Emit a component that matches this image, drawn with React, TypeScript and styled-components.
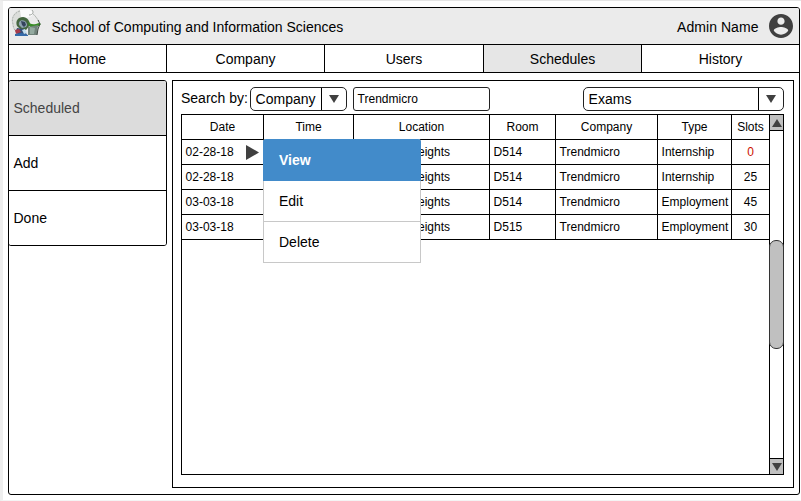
import React from "react";
import styled, { createGlobalStyle } from "styled-components";

const Global = createGlobalStyle`
  *, *::before, *::after { box-sizing: border-box; }
  html, body { margin: 0; background: #fff; overflow: hidden; }
  body { font-family: "Liberation Sans", Arial, sans-serif; font-size: 14px; color: #000; }
`;

const Page = styled.div`
  width: 801px;
  height: 501px;
  padding: 6px 1px 0 5px;
  background: #fff;
  border-top: 1px solid #e5e5e5;
  border-left: 3px solid #eee;
  border-bottom: 1px solid #f4f4f4;
`;

const Frame = styled.div`
  width: 792px;
  height: 488px;
  border: 1px solid #000;
  border-radius: 3px;
  background: #fff;
`;

const Header = styled.header`
  display: flex;
  align-items: center;
  height: 37px;
  padding: 0 6px 0 1px;
  background: #ebebeb;
  border-bottom: 1px solid #000;
  border-radius: 2px 2px 0 0;
`;

const Title = styled.div`
  flex: 1;
  padding: 1px 0 0 9.5px;
`;

const Admin = styled.div`
  padding-top: 1px;
  margin-right: 10.5px;
  letter-spacing: 0.05px;
`;

const Nav = styled.nav`
  display: grid;
  grid-template-columns: 158px 158px 159px 158px 157px;
  height: 28px;
  border-bottom: 1px solid #000;
`;

const Tab = styled.div<{ $active?: boolean }>`
  display: flex;
  align-items: center;
  justify-content: center;
  padding-top: 1px;
  background: ${(p) => (p.$active ? "#e6e6e6" : "#fff")};
  border-right: 1px solid #000;
  &:last-child { border-right: 0; }
`;

const Body = styled.div`
  display: flex;
  align-items: flex-start;
  gap: 5px;
  margin-left: -1px;
  padding-top: 7px;
`;

const Sidebar = styled.aside`
  width: 159px;
  height: 166px;
  border: 1px solid #000;
  border-radius: 3px;
  overflow: hidden;
`;

const SideItem = styled.div<{ $active?: boolean }>`
  display: flex;
  align-items: center;
  height: 55px;
  padding: 0 0 1px 4.5px;
  background: ${(p) => (p.$active ? "#dcdcdc" : "#fff")};
  color: ${(p) => (p.$active ? "#444" : "#000")};
  border-bottom: 1px solid #000;
  &:last-child { border-bottom: 0; }
`;

const Panel = styled.main`
  width: 622px;
  height: 408px;
  padding: 6px 9px 0 8px;
  border: 1px solid #000;
`;

const SearchBar = styled.div`
  display: flex;
  height: 24px;
  align-items: stretch;
`;

const SearchLabel = styled.label`
  width: 69px;
  line-height: 23px;
  white-space: nowrap;
`;

const Combo = styled.div<{ $width: number }>`
  display: flex;
  width: ${(p) => p.$width}px;
  border: 1px solid #222;
  border-radius: 5px;
  background: #fff;
`;

const ComboText = styled.div`
  flex: 1;
  padding-left: 4.6px;
  line-height: 23px;
`;

const ComboArrow = styled.div`
  display: flex;
  width: 25px;
  align-items: center;
  justify-content: center;
  border-left: 1px solid #000;
`;

const SearchInput = styled.div`
  width: 137px;
  margin: 0 93px 0 6px;
  padding-left: 3.6px;
  border: 1px solid #222;
  border-radius: 3px;
  font-size: 12px;
  line-height: 22px;
`;

const TableBox = styled.div`
  position: relative;
  display: flex;
  width: 603px;
  height: 361px;
  margin-top: 3px;
  border: 1px solid #000;
`;

const Rows = styled.div`
  width: 587px;
`;

const Row = styled.div`
  display: grid;
  grid-template-columns: 82px 90px 136px 66px 102px 74px 37px;
  height: 25px;
  border-bottom: 1px solid #000;
  font-size: 12px;
`;

const Cell = styled.div<{ $center?: boolean; $alert?: boolean }>`
  display: flex;
  align-items: center;
  justify-content: ${(p) => (p.$center ? "center" : "space-between")};
  padding: 0 ${(p) => (p.$center ? 0 : 4)}px 0 ${(p) => (p.$center ? 0 : 3.6)}px;
  color: ${(p) => (p.$alert ? "#cc1100" : "#000")};
  border-right: 1px solid #000;
  white-space: nowrap;
  &:last-child { border-right: 0; }
`;

const LocationCell = styled(Cell)`
  justify-content: flex-end;
  padding-right: 39px;
`;

const ScrollBar = styled.div`
  display: flex;
  flex-direction: column;
  width: 14px;
  border-left: 1px solid #000;
`;

const ScrollButton = styled.div<{ $bottom?: boolean }>`
  display: flex;
  height: 16px;
  align-items: center;
  justify-content: center;
  background: #c0c0c0;
  border-top: ${(p) => (p.$bottom ? "1px solid #000" : "0")};
  border-bottom: ${(p) => (p.$bottom ? "0" : "1px solid #000")};
`;

const Track = styled.div`
  flex: 1;
  padding-top: 109px;
`;

const Thumb = styled.div`
  width: 15px;
  height: 109px;
  margin-left: -1px;
  background: #c0c0c0;
  border: 1px solid #333;
  border-radius: 7px;
`;

const Menu = styled.div`
  position: absolute;
  top: 24px;
  left: 81px;
  width: 158px;
  height: 124px;
  background: #fff;
  border: 1px solid #c8c8c8;
  border-top: 0;
  border-radius: 3px 3px 0 0;
`;

const MenuItem = styled.div<{ $active?: boolean }>`
  display: flex;
  align-items: center;
  height: 41px;
  padding: 0 0 1px 15px;
  color: #000;
  border-bottom: 1px solid #c8c8c8;
  &:last-child { border-bottom: 0; padding-bottom: 2px; }
  ${(p) =>
    p.$active &&
    `
    height: 42px;
    margin: 0 -1px;
    padding-left: 16px;
    background: #428bca;
    color: #fff;
    font-weight: bold;
    border-bottom: 0;
    border-radius: 3px 3px 0 0;
  `}
`;

const Triangle = ({ dir, w, h }: { dir: "up" | "down" | "right"; w: number; h: number }) => {
  const points = {
    up: `0,${h} ${w / 2},0 ${w},${h}`,
    down: `0,0 ${w},0 ${w / 2},${h}`,
    right: `0,0 ${w},${h / 2} 0,${h}`,
  }[dir];
  return (
    <svg width={w} height={h} viewBox={`0 0 ${w} ${h}`}>
      <polygon points={points} fill="#404040" />
    </svg>
  );
};

const Logo = () => (
  <svg width="32" height="36" viewBox="0 0 32 36">
    <path d="M9 2C4 4 1 9 2 15c1 5 3 8 7 11l3-6V9l9-2-3-4z" fill="#dcdedb" />
    <path d="M10 3C4 5 1 10 3 16c0 4 2 7 5 10" fill="none" stroke="#adb1ae" strokeDasharray="2 1" />
    <path d="M10 2l9-1 4 3-1 4-6 2-5-1z" fill="#fbfbfb" />
    <path d="M22 2c2 2 1 5-3 5" fill="none" stroke="#9ba09c" />
    <path d="M23 6c2 1 4 5 6 7" fill="none" stroke="#b5b9b5" />
    <path d="M7 18c-2-5 1-9 6-9 4 0 7 4 7 8l-4 5-6-1z" fill="#44663f" />
    <path d="M9 17c-1-4 3-6 6-4 2 2 3 4 1 6l-4 1z" fill="#8da2b0" />
    <path d="M11 13l4 1 1 3-2 2-2-2z" fill="#34435c" />
    <path d="M18 13c2 4 6 4 11 2l2 1c-2 3-8 5-12 2z" fill="#388c26" />
    <path d="M18 19l10-2-1 10h-9z" fill="#71837b" />
    <path d="M20 19l5 1-1 6h-4z" fill="#94aaa0" />
    <path d="M28 12l2 4-2 5-1 6" fill="none" stroke="#3e4742" />
    <path d="M7 20l7 1 3 6H8l-2-4z" fill="#354f78" />
    <path d="M5 22l4-1 2 3-5 2z" fill="#a83a49" />
    <path d="M5 26l7-1 6 2v1H5z" fill="#356baa" />
    <path d="M12 22l3-1 2 4-3 1z" fill="#c3deed" />
  </svg>
);

const UserIcon = () => (
  <svg width="24" height="24" viewBox="2 2 20 20">
    <path
      fill="#404040"
      d="M12 2C6.48 2 2 6.48 2 12s4.48 10 10 10 10-4.48 10-10S17.52 2 12 2zm0 3c1.66 0 3 1.34 3 3s-1.34 3-3 3-3-1.34-3-3 1.34-3 3-3zm0 14.2c-2.5 0-4.71-1.28-6-3.22.03-1.99 4-3.08 6-3.08 1.99 0 5.97 1.09 6 3.08-1.29 1.94-3.5 3.22-6 3.22z"
    />
  </svg>
);

const tabs = ["Home", "Company", "Users", "Schedules", "History"];
const sections = ["Scheduled", "Add", "Done"];
const columns = ["Date", "Time", "Location", "Room", "Company", "Type", "Slots"];
const schedules = [
  { date: "02-28-18", room: "D514", type: "Internship", slots: 0 },
  { date: "02-28-18", room: "D514", type: "Internship", slots: 25 },
  { date: "03-03-18", room: "D514", type: "Employment", slots: 45 },
  { date: "03-03-18", room: "D515", type: "Employment", slots: 30 },
];

export default function App() {
  return (
    <>
      <Global />
      <Page>
        <Frame>
          <Header>
            <Logo />
            <Title>School of Computing and Information Sciences</Title>
            <Admin>Admin Name</Admin>
            <UserIcon />
          </Header>
          <Nav>
            {tabs.map((t) => (
              <Tab key={t} $active={t === "Schedules"}>{t}</Tab>
            ))}
          </Nav>
          <Body>
            <Sidebar>
              {sections.map((s, i) => (
                <SideItem key={s} $active={i === 0}>{s}</SideItem>
              ))}
            </Sidebar>
            <Panel>
              <SearchBar>
                <SearchLabel>Search by:</SearchLabel>
                <Combo $width={97}>
                  <ComboText>Company</ComboText>
                  <ComboArrow><Triangle dir="down" w={10} h={8} /></ComboArrow>
                </Combo>
                <SearchInput>Trendmicro</SearchInput>
                <Combo $width={201}>
                  <ComboText>Exams</ComboText>
                  <ComboArrow><Triangle dir="down" w={10} h={8} /></ComboArrow>
                </Combo>
              </SearchBar>
              <TableBox>
                <Rows>
                  <Row>
                    {columns.map((c) => <Cell key={c} $center>{c}</Cell>)}
                  </Row>
                  {schedules.map((s, i) => (
                    <Row key={i}>
                      <Cell>
                        {s.date}
                        {i === 0 && <Triangle dir="right" w={13} h={15} />}
                      </Cell>
                      <Cell />
                      <LocationCell>Heights</LocationCell>
                      <Cell>{s.room}</Cell>
                      <Cell>Trendmicro</Cell>
                      <Cell>{s.type}</Cell>
                      <Cell $center $alert={s.slots === 0}>{s.slots}</Cell>
                    </Row>
                  ))}
                </Rows>
                <ScrollBar>
                  <ScrollButton><Triangle dir="up" w={10} h={8} /></ScrollButton>
                  <Track><Thumb /></Track>
                  <ScrollButton $bottom><Triangle dir="down" w={10} h={8} /></ScrollButton>
                </ScrollBar>
                <Menu>
                  <MenuItem $active>View</MenuItem>
                  <MenuItem>Edit</MenuItem>
                  <MenuItem>Delete</MenuItem>
                </Menu>
              </TableBox>
            </Panel>
          </Body>
        </Frame>
      </Page>
    </>
  );
}
